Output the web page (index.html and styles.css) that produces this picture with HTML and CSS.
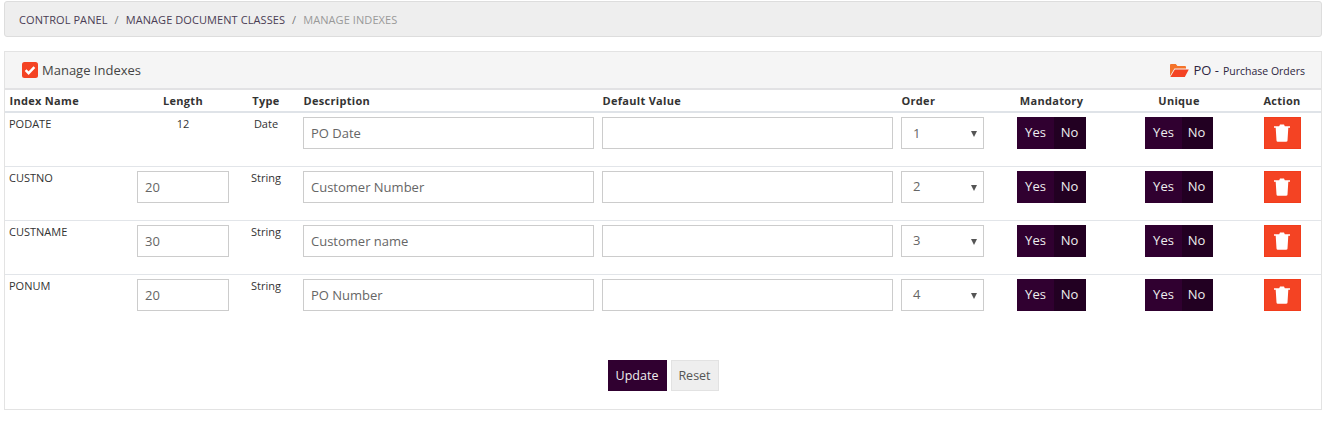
FILE: index.html
```html
<!DOCTYPE html>
<html lang="en">
<head>
<meta charset="utf-8">
<title>Manage Indexes</title>
<link rel="stylesheet" href="styles.css">
</head>
<body>
<nav class="crumbs">
  <a>CONTROL PANEL</a><span class="sep">/</span><a>MANAGE DOCUMENT CLASSES</a><span class="sep">/</span><span class="current">MANAGE INDEXES</span>
</nav>
<section class="panel">
  <header class="panel-head">
    <div class="title">
      <svg class="check" viewBox="0 0 16 16"><rect width="16" height="16" rx="2.5" fill="#f44323"/><path d="M3.6 8.2l3 3 5.8-6" fill="none" stroke="#fff" stroke-width="2.4"/></svg>
      <span>Manage Indexes</span>
    </div>
    <div class="doc">
      <svg class="folder" viewBox="0 0 20 15"><path d="M1 13V2.2C1 1.500 1.500 1 2.200 1h4.600l1.600 2h7.400c.7 0 1.200.5 1.200 1.200V5.400H5.400L1 13z" fill="#f4732a"/><path d="M5.800 6.400H19.800L15.800 14H1.300z" fill="#f44323"/></svg>
      <span class="code">PO -</span><span class="name">Purchase Orders</span>
    </div>
  </header>
  <table class="grid">
    <colgroup>
      <col class="c1"><col class="c2"><col class="c3"><col class="c4"><col class="c5"><col class="c6"><col class="c7"><col class="c8"><col class="c9">
    </colgroup>
    <thead>
      <tr><th>Index Name</th><th class="mid">Length</th><th class="mid">Type</th><th>Description</th><th>Default Value</th><th>Order</th><th class="mid">Mandatory</th><th class="mid">Unique</th><th class="mid">Action</th></tr>
    </thead>
    <tbody>
      <tr>
        <td>PODATE</td><td class="mid">12</td><td class="mid">Date</td>
        <td><input class="field" value="PO Date"></td><td><input class="field"></td>
        <td><div class="select"><span>1</span><i></i></div></td>
        <td class="mid"><div class="toggle"><span class="yes">Yes</span><span class="no">No</span></div></td>
        <td class="mid"><div class="toggle tight"><span class="yes">Yes</span><span class="no">No</span></div></td>
        <td class="mid"><button class="del"><svg viewBox="0 0 16 18"><path d="M0 2.200h5.200L6 .6h4l.8 1.600H16v1.600H0zM1.700 3.800h12.600l-.8 12.700c-.1.800-.5 1.200-1.200 1.200H3.700c-.7 0-1.100-.4-1.200-1.200z" fill="#fff"/></svg></button></td>
      </tr>
      <tr>
        <td>CUSTNO</td><td class="mid"><input class="field" value="20"></td><td class="mid">String</td>
        <td><input class="field" value="Customer Number"></td><td><input class="field"></td>
        <td><div class="select"><span>2</span><i></i></div></td>
        <td class="mid"><div class="toggle"><span class="yes">Yes</span><span class="no">No</span></div></td>
        <td class="mid"><div class="toggle tight"><span class="yes">Yes</span><span class="no">No</span></div></td>
        <td class="mid"><button class="del"><svg viewBox="0 0 16 18"><path d="M0 2.200h5.200L6 .6h4l.8 1.600H16v1.600H0zM1.700 3.800h12.600l-.8 12.700c-.1.800-.5 1.200-1.200 1.200H3.700c-.7 0-1.100-.4-1.200-1.200z" fill="#fff"/></svg></button></td>
      </tr>
      <tr>
        <td>CUSTNAME</td><td class="mid"><input class="field" value="30"></td><td class="mid">String</td>
        <td><input class="field" value="Customer name"></td><td><input class="field"></td>
        <td><div class="select"><span>3</span><i></i></div></td>
        <td class="mid"><div class="toggle"><span class="yes">Yes</span><span class="no">No</span></div></td>
        <td class="mid"><div class="toggle tight"><span class="yes">Yes</span><span class="no">No</span></div></td>
        <td class="mid"><button class="del"><svg viewBox="0 0 16 18"><path d="M0 2.200h5.200L6 .6h4l.8 1.600H16v1.600H0zM1.700 3.800h12.600l-.8 12.700c-.1.800-.5 1.200-1.200 1.200H3.700c-.7 0-1.100-.4-1.200-1.200z" fill="#fff"/></svg></button></td>
      </tr>
      <tr class="last">
        <td>PONUM</td><td class="mid"><input class="field" value="20"></td><td class="mid">String</td>
        <td><input class="field" value="PO Number"></td><td><input class="field"></td>
        <td><div class="select"><span>4</span><i></i></div></td>
        <td class="mid"><div class="toggle"><span class="yes">Yes</span><span class="no">No</span></div></td>
        <td class="mid"><div class="toggle tight"><span class="yes">Yes</span><span class="no">No</span></div></td>
        <td class="mid"><button class="del"><svg viewBox="0 0 16 18"><path d="M0 2.200h5.200L6 .6h4l.8 1.600H16v1.600H0zM1.700 3.800h12.600l-.8 12.700c-.1.800-.5 1.200-1.200 1.200H3.700c-.7 0-1.100-.4-1.200-1.200z" fill="#fff"/></svg></button></td>
      </tr>
    </tbody>
  </table>
  <div class="actions">
    <button class="btn primary">Update</button>
    <button class="btn plain">Reset</button>
  </div>
</section>
</body>
</html>
```
FILE: styles.css
```css
* { box-sizing: border-box; }
html, body { margin: 0; padding: 0; }
body {
  background: #fff;
  color: #333;
  font-family: "Open Sans", sans-serif;
  font-size: 11px;
  padding: 1px 4px 0;
}
.crumbs {
  height: 36px;
  display: flex;
  align-items: center;
  padding: 0 14px;
  background: #eee;
  border: 1px solid #ddd;
  border-radius: 3px;
  font-size: 11px;
  letter-spacing: .08px;
  color: #4a3d54;
}
.sep { margin: 0 7px; color: #777; }
.current { color: #999; }
.panel {
  margin-top: 14px;
  height: 359px;
  border: 1px solid #e3e3e3;
  display: flex;
  flex-direction: column;
}
.panel-head {
  height: 38px;
  flex: none;
  display: flex;
  justify-content: space-between;
  align-items: center;
  padding: 0 16px 0 17px;
  background: #f5f5f5;
  border-bottom: 2px solid #e2e2e4;
}
.title { display: flex; align-items: center; gap: 4px; font-size: 13px; color: #444; }
.check { width: 16px; height: 16px; }
.doc { display: flex; align-items: center; color: #2d2540; font-size: 13px; }
.folder { width: 20px; height: 15px; margin-right: 4px; }
.name { font-size: 10.500px; margin: 1px 0 0 4px; }
.grid {
  width: 100%;
  table-layout: fixed;
  border-collapse: collapse;
}
.c1 { width: 128px; }
.c2 { width: 100px; }
.c3 { width: 66px; }
.c4 { width: 299px; }
.c5 { width: 299px; }
.c6 { width: 91px; }
.c7 { width: 127px; }
.c8 { width: 128px; }
th {
  height: 22px;
  padding: 0 4.500px;
  text-align: left;
  font-size: 11px;
  font-weight: 700;
  letter-spacing: .3px;
  color: #333;
  border-bottom: 2px solid #dfe3e8;
}
td {
  height: 54px;
  padding: 4px;
  vertical-align: top;
  border-bottom: 1px solid #e2e5e9;
  line-height: 13px;
  font-size: 11px;
}
tr.last td { border-bottom: 0; }
.mid { text-align: center; }
.field {
  display: block;
  width: 100%;
  height: 32px;
  padding: 0 7px;
  border: 1px solid #ccc;
  background: #fff;
  font: 13px "Open Sans", sans-serif;
  color: #666;
  outline: 0;
}
.select {
  position: relative;
  width: 83px;
  height: 32px;
  padding-left: 11px;
  border: 1px solid #ccc;
  display: flex;
  align-items: center;
  font-size: 13px;
  color: #666;
}
.select i {
  position: absolute;
  right: 6px;
  top: 13px;
  border-left: 3px solid transparent;
  border-right: 3px solid transparent;
  border-top: 6px solid #555;
}
.toggle {
  display: inline-flex;
  height: 32px;
  font-size: 13px;
  line-height: 30px;
  color: #eee;
}
.yes { width: 37px; background: #300030; }
.no { width: 32px; background: #220022; padding-right: 1px; }
.tight .no { width: 31px; padding-right: 2px; }
.del {
  display: inline-flex;
  align-items: center;
  justify-content: center;
  width: 37px;
  height: 32px;
  padding: 0;
  background: #f44323;
  border: 1px solid #f13c1c;
}
.del svg { width: 16px; height: 18px; }
.actions {
  display: flex;
  justify-content: center;
  gap: 4px;
  margin-top: 32px;
}
.btn {
  height: 31px;
  padding: 0;
  font: 12.500px "Open Sans", sans-serif;
}
.primary { width: 59px; background: #300030; border: 1px solid #300030; color: #eee; }
.plain { width: 48px; background: #eee; border: 1px solid #e2e2e2; color: #555; }
```
